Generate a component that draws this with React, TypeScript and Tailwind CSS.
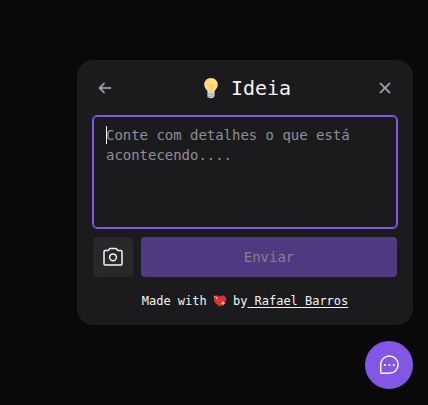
import { PiArrowLeftBold, PiXBold } from 'react-icons/pi'

function BulbIcon() {
  return (
    <svg viewBox="0 0 24 24" className="size-6" aria-hidden="true">
      <path d="M12 1.9c-3.9 0-6.8 2.9-6.8 6.7 0 3.1 2 4.5 3 6.4.4.8.4 1.5 1.2 1.5h5.2c.8 0 .8-.7 1.2-1.5 1-1.9 3-3.3 3-6.4 0-3.8-2.9-6.7-6.8-6.7Z" fill="#ffd983" />
      <path d="M9.3 8.6 12 11.4l2.7-2.8M12 11.4v5" fill="none" stroke="#ffcc4d" strokeWidth="1.1" strokeLinecap="round" />
      <path d="M8.5 16h7v3.8c0 1.4-1.3 2.5-3.5 2.5s-3.5-1.1-3.5-2.5Z" fill="#ccd6dd" />
      <path d="m8.6 18.6 6.8-.9M8.7 20.8l6.6-.9" stroke="#99aab5" strokeWidth="1" strokeLinecap="round" />
    </svg>
  )
}

function HeartIcon() {
  return (
    <svg viewBox="0 0 36 36" className="inline-block h-3 w-3 overflow-visible align-[-1.5px]" aria-hidden="true">
      <path d="M36.5 11.8C36.5 6.4 32 1.5 26.1 1.5c-3.3 0-6.3 1.7-8.1 4.2-1.8-2.5-4.8-4.2-8.1-4.2C4 1.5-.5 6.4-.5 11.8c0 10 11 19.4 18.5 22.7 7.5-3.3 18.5-12.7 18.5-22.7Z" fill="#dd2e44" />
      <path d="m8 4 1.3 3.7L13 9l-3.7 1.3L8 14l-1.3-3.7L3 9l3.7-1.3ZM27 17l2.3 5.7L35 25l-5.7 2.3L27 33l-2.3-5.7L19 25l5.7-2.3ZM2 0l1 3 3 1-3 1-1 3-1-3-3-1 3-1Z" fill="#ffcc4d" />
    </svg>
  )
}

function CameraIcon() {
  return (
    <svg viewBox="0 0 24 24" className="size-6" fill="none" stroke="currentColor" strokeWidth="1.5" strokeLinejoin="round" aria-hidden="true">
      <path d="M19.8 20H4.2A1.2 1.2 0 0 1 3 18.8V6.7a1.2 1.2 0 0 1 1.2-1.2h3L8.7 3.6h6.6l1.5 1.9h3A1.2 1.2 0 0 1 21 6.7v12.1a1.2 1.2 0 0 1-1.2 1.2Z" />
      <circle cx="12" cy="12.3" r="3.4" />
    </svg>
  )
}

function ChatIcon() {
  return (
    <svg viewBox="0 0 24 24" className="size-6" aria-hidden="true">
      <path d="M12.4 20.3H4.5a.8.8 0 0 1-.8-.8v-7.9a8.7 8.7 0 1 1 8.7 8.7Z" fill="none" stroke="currentColor" strokeWidth="1.5" strokeLinejoin="round" />
      <circle cx="8" cy="12" r="1.1" fill="currentColor" />
      <circle cx="12.4" cy="12" r="1.1" fill="currentColor" />
      <circle cx="16.8" cy="12" r="1.1" fill="currentColor" />
    </svg>
  )
}

export default function App() {
  return (
    <main className="flex h-[405px] w-full flex-col items-end gap-4 bg-[#09090a] pt-[60px] pr-[15px] font-['DejaVu_Sans_Mono','Liberation_Mono',monospace] text-[#f4f4f5]">
      <section className="flex h-[265px] w-[336px] flex-col rounded-2xl bg-[#1b1b1d] p-4">
        <header className="flex h-6 items-center justify-between px-1">
          <button aria-label="Voltar" className="text-[#a1a1aa]">
            <PiArrowLeftBold size={16} stroke="currentColor" strokeWidth={6} />
          </button>
          <h1 className="flex items-center gap-2 text-xl leading-6 tracking-[-0.04px]">
            <BulbIcon />
            Ideia
          </h1>
          <button aria-label="Fechar" className="text-[#a1a1aa]">
            <PiXBold size={16} stroke="currentColor" strokeWidth={6} />
          </button>
        </header>

        <div className="mt-4 flex h-28 w-full rounded border border-[#8257e5] px-3 py-2 text-sm leading-5 tracking-[-0.028px] text-[#8f8f96] ring-1 ring-[#8257e5]">
          <span className="mt-px -mr-px h-[18px] w-px shrink-0 bg-white" />
          <p>Conte com detalhes o que está acontecendo....</p>
        </div>

        <div className="mt-[9px] flex gap-2">
          <button aria-label="Capturar tela" className="flex size-10 items-center justify-center rounded bg-[#28282a] text-[#f4f4f5]">
            <CameraIcon />
          </button>
          <button className="h-10 flex-1 rounded bg-[#4f3980] text-sm tracking-[-0.028px] text-[#858087]">Enviar</button>
        </div>

        <footer className="mt-4 text-center text-xs leading-4 tracking-[-0.024px] whitespace-nowrap">
          Made with <HeartIcon /> by<a href="#" className="underline underline-offset-2"> Rafael Barros</a>
        </footer>
      </section>

      <button aria-label="Feedback" className="flex size-12 items-center justify-center rounded-full bg-[#8257e5] text-white">
        <ChatIcon />
      </button>
    </main>
  )
}
